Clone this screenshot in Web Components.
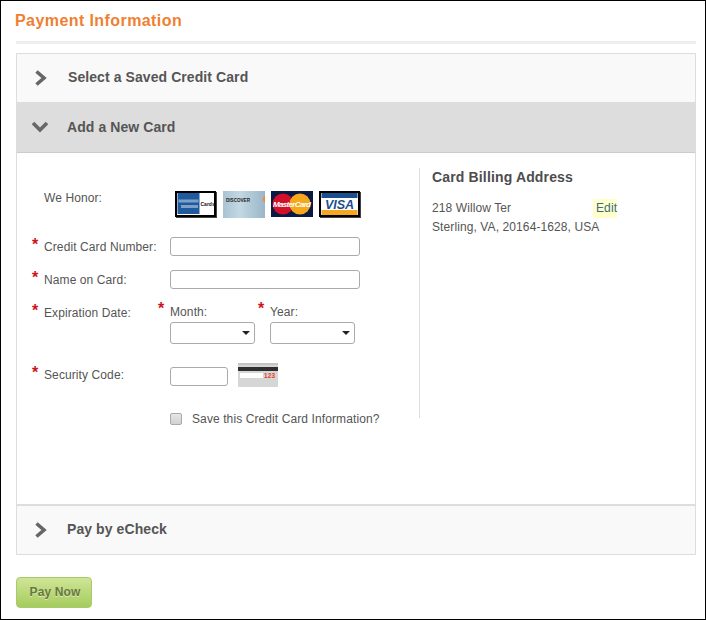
<!DOCTYPE html>
<html>
<head>
<meta charset="utf-8">
<title>Payment Information</title>
<style>
  html, body { margin: 0; padding: 0; background: #fff; }
  body { font: 12px "Liberation Sans", Arial, sans-serif; color: #555; }
</style>
</head>
<body>
<payment-page>
  <pay-panel title-text="Select a Saved Credit Card" label-x="51"></pay-panel>
  <pay-panel title-text="Add a New Card" open label-x="50">
    <card-form></card-form>
    <billing-address></billing-address>
  </pay-panel>
  <pay-panel title-text="Pay by eCheck" last label-x="50"></pay-panel>
</payment-page>

<script>
const chevrons = {
  right: '<svg width="14" height="18" viewBox="0 0 14 18"><path d="M2.5 2.5 L10 9 L2.5 15.5" fill="none" stroke="#666" stroke-width="3.6"/></svg>',
  down: '<svg width="18" height="14" viewBox="0 0 18 14"><path d="M2 3 L9 10 L16 3" fill="none" stroke="#666" stroke-width="3.6"/></svg>'
}

class PaymentPage extends HTMLElement {
  constructor () {
    super()
    this.attachShadow({ mode: 'open' }).innerHTML = `
      <style>
        :host {
          display: block;
          box-sizing: border-box;
          width: 706px;
          height: 620px;
          border: 1px solid #000;
          padding: 0 9px 0 15px;
          font: 12px "Liberation Sans", Arial, sans-serif;
          letter-spacing: .1px;
          color: #555;
        }
        h1 {
          margin: 0 0 0 -1px;
          padding-top: 10px;
          height: 40px;
          box-sizing: border-box;
          font-size: 16px;
          line-height: 19px;
          font-weight: bold;
          letter-spacing: .42px;
          color: #ef7f33;
        }
        .rule { height: 3px; background: #eee; margin-bottom: 9px; }
        .panels { border: 1px solid #ddd; display: flex; flex-direction: column; }
        button {
          margin-top: 22px;
          display: block;
          width: 76px;
          height: 31px;
          padding: 0 0 2px 2px;
          border: 1px solid #a9c96f;
          border-radius: 4px;
          background: linear-gradient(#cfe596, #a5cc5e);
          color: #68773f;
          font: bold 12px "Liberation Sans", Arial, sans-serif;
          letter-spacing: .12px;
          text-shadow: 0 1px 0 #dcebb9;
        }
      </style>
      <h1>Payment Information</h1>
      <div class="rule"></div>
      <div class="panels"><slot></slot></div>
      <button type="button">Pay Now</button>
    `
  }
}

class PayPanel extends HTMLElement {
  constructor () {
    super()
    this.attachShadow({ mode: 'open' })
  }

  connectedCallback () {
    const open = this.hasAttribute('open')
    const last = this.hasAttribute('last')
    this.shadowRoot.innerHTML = `
      <style>
        :host { display: block; }
        header {
          display: flex;
          align-items: center;
          box-sizing: border-box;
          height: ${open ? 51 : last ? 50 : 48}px;
          background: ${open ? '#ddd' : '#f9f9f9'};
          border-bottom: ${open ? '1px solid #ccc' : '0'};
          border-top: ${last ? '2px solid #ddd' : '0'};
          font-weight: bold;
          font-size: 14px;
          letter-spacing: .08px;
          color: #555;
        }
        .title { margin-top: ${open ? 0 : -2}px; }
        .chev { width: ${this.getAttribute('label-x')}px; flex: none; display: flex; padding-left: ${open ? 14 : 17}px; box-sizing: border-box; }
        .body { display: ${open ? 'flex' : 'none'}; height: 351px; box-sizing: border-box; padding-top: 15px; align-items: flex-start; }
      </style>
      <header><span class="chev">${open ? chevrons.down : chevrons.right}</span><span class="title">${this.getAttribute('title-text')}</span></header>
      <div class="body"><slot></slot></div>
    `
  }
}

class CardLogos extends HTMLElement {
  constructor () {
    super()
    this.attachShadow({ mode: 'open' }).innerHTML = `
      <style>
        :host { display: flex; gap: 6px; margin-left: 5px; letter-spacing: 0; }
        svg { display: block; }
      </style>
      <svg width="42" height="28" viewBox="0 0 42 28">
        <rect x="1" y="2" width="41" height="26" fill="#444"/>
        <rect x=".5" y="1.5" width="40" height="25" fill="#fff" stroke="#000"/>
        <rect x="1.5" y="2.5" width="38" height="23" fill="none" stroke="#000"/>
        <rect x="2.5" y="3" width="22" height="21" fill="#1d5a9e"/>
        <rect x="3.5" y="9.5" width="20" height="3" fill="#7f9fc6"/>
        <rect x="6" y="15" width="17" height="3" fill="#7f9fc6"/>
        <text x="25.5" y="15.5" font-size="5" font-weight="bold" fill="#111">Cards</text>
      </svg>
      <svg width="42" height="28" viewBox="0 0 42 28">
        <defs>
          <linearGradient id="dg" x1="0" x2="1" y1="0" y2="0">
            <stop offset="0" stop-color="#a9c3d3"/><stop offset=".4" stop-color="#c3d8e2"/><stop offset="1" stop-color="#9ab6c8"/>
          </linearGradient>
        </defs>
        <rect x="0" y="1" width="42" height="27" fill="url(#dg)"/>
        <text x="3" y="11.5" font-size="4.6" font-weight="bold" fill="#222">DISCOVER</text>
        <path d="M42 5.5 A4 4 0 0 0 42 12.5 Z" fill="#ef8a2c"/>
      </svg>
      <svg width="42" height="28" viewBox="0 0 42 28">
        <rect x="0" y="1" width="42" height="26" fill="#0a1a45"/>
        <circle cx="12" cy="14" r="10.5" fill="#d3102a"/>
        <circle cx="29" cy="14" r="10.5" fill="#f5a81c"/>
        <text x="21" y="16.5" font-size="8" font-weight="bold" fill="#fff" text-anchor="middle" textLength="38" font-style="italic">MasterCard</text>
      </svg>
      <svg width="42" height="28" viewBox="0 0 42 28">
        <rect x="1" y="2" width="41" height="26" fill="#444"/>
        <rect x=".5" y="1.5" width="40" height="25" fill="#fff" stroke="#000"/>
        <rect x="1.5" y="2.5" width="38" height="23" fill="#fff" stroke="#000"/>
        <rect x="2.5" y="3" width="36" height="5" fill="#1a4f8f"/>
        <rect x="2.5" y="20" width="36" height="5" fill="#f5a623"/>
        <text x="20.5" y="18.5" font-size="12.5" font-weight="bold" font-style="italic" fill="#1a4f8f" text-anchor="middle">VISA</text>
      </svg>
    `
  }
}

class CardForm extends HTMLElement {
  constructor () {
    super()
    this.attachShadow({ mode: 'open' }).innerHTML = `
      <style>
        :host {
          display: grid;
          flex: none;
          box-sizing: border-box;
          width: 403px;
          height: 250px;
          padding: 22px 0 0 15px;
          grid-template-columns: 12px 126px 1fr;
          grid-template-rows: 47px 33px 33px 60px 50px 12px;
          border-right: 1px solid #ddd;
          font-size: 12px;
          line-height: 21px;
          color: #555;
          align-items: start;
        }
        .star { color: #d0121b; font-size: 16px; line-height: 12px; height: 12px; font-weight: bold; margin-top: 2px; }
        .honor { grid-column: 2; line-height: 16px; }
        .logos { grid-column: 3; }
        input[type=text], .pick select {
          box-sizing: border-box;
          border: 1px solid #aaa;
          border-radius: 3px;
          background: #fff;
          height: 19px;
          padding: 0;
          margin: 0;
          display: block;
        }
        .wide { width: 190px; }
        .exp { display: flex; margin-left: -12px; }
        .exp .col { display: grid; grid-template-columns: 12px auto; align-items: start; }
        .exp .col + .col { margin-left: 3px; }
        .exp .lbl { height: 19px; line-height: 18px; }
        .pick { grid-column: 2; position: relative; width: 85px; }
        .pick select { appearance: none; width: 85px; height: 22px; }
        .pick::after {
          content: "";
          position: absolute;
          right: 5px;
          top: 9px;
          border: 4px solid transparent;
          border-top: 4px solid #222;
          border-bottom: 0;
        }
        .sec { display: flex; align-items: flex-start; gap: 10px; }
        .sec input { width: 58px; margin-top: 4px; }
        .sec svg { display: block; }
        .seclabel { margin-top: 2px; }
        .save { grid-column: 3; display: flex; align-items: center; gap: 10px; height: 12px; }
        .save input { appearance: none; width: 12px; height: 12px; margin: 0; box-sizing: border-box; border: 1px solid #aaa; border-radius: 2px; background: linear-gradient(#e6e6e6, #d2d2d2); }
      </style>
      <span class="honor">We Honor:</span>
      <card-logos class="logos"></card-logos>

      <span class="star">*</span><label>Credit Card Number:</label>
      <input type="text" class="wide">

      <span class="star">*</span><label>Name on Card:</label>
      <input type="text" class="wide">

      <span class="star">*</span><label>Expiration Date:</label>
      <div class="exp">
        <div class="col">
          <span class="star" style="margin-top:0">*</span><span class="lbl">Month:</span>
          <div class="pick"><select></select></div>
        </div>
        <div class="col">
          <span class="star" style="margin-top:0">*</span><span class="lbl">Year:</span>
          <div class="pick"><select></select></div>
        </div>
      </div>

      <span class="star seclabel" style="margin-top:4px">*</span><label class="seclabel">Security Code:</label>
      <div class="sec">
        <input type="text">
        <svg width="40" height="24" viewBox="0 0 40 24">
          <rect x="0" y="0" width="40" height="24" rx="1" fill="#d6d6d6"/>
          <rect x="0" y="0" width="40" height="2" fill="#c4c4c4"/>
          <rect x="0" y="4" width="40" height="4" fill="#2f2f2f"/>
          <rect x="2" y="10" width="23" height="5" fill="#fff"/>
          <text x="26" y="15" font-size="6.5" font-weight="bold" fill="#e8401a">123</text>
        </svg>
      </div>

      <label class="save"><input type="checkbox"><span>Save this Credit Card Information?</span></label>
    `
  }
}

class BillingAddress extends HTMLElement {
  constructor () {
    super()
    this.attachShadow({ mode: 'open' }).innerHTML = `
      <style>
        :host { display: block; padding-left: 12px; font-size: 12px; color: #555; line-height: 19px; }
        h2 { margin: 0 0 13px; font-size: 14px; line-height: 18px; font-weight: bold; letter-spacing: .15px; color: #4d4d4d; }
        .line { display: flex; }
        .street { width: 161px; }
        a { color: #3a6a82; background: #ffffcc; padding: 0 0 0 3px; text-decoration: none; }
      </style>
      <h2>Card Billing Address</h2>
      <div class="line"><span class="street">218 Willow Ter</span><a>Edit</a></div>
      <div>Sterling, VA, 20164-1628, USA</div>
    `
  }
}

customElements.define('card-logos', CardLogos)
customElements.define('card-form', CardForm)
customElements.define('billing-address', BillingAddress)
customElements.define('pay-panel', PayPanel)
customElements.define('payment-page', PaymentPage)
</script>
</body>
</html>
